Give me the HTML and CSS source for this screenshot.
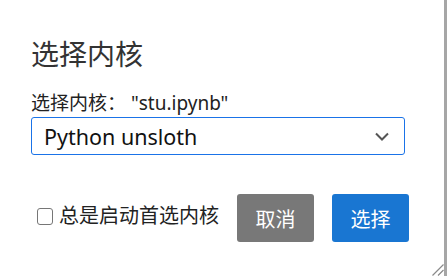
FILE: index.html
```html
<!DOCTYPE html>
<html lang="zh-CN">
<head>
<meta charset="utf-8">
<title>选择内核</title>
<link rel="stylesheet" href="styles.css">
</head>
<body>
<div class="dialog">
  <h1 class="title">选择内核</h1>
  <p class="label">选择内核： "stu.ipynb"</p>
  <div class="select">
    <span class="select-value">Python unsloth</span>
    <svg class="chevron" width="14" height="9" viewBox="0 0 14 9"><path d="M1 1.5 L7 7.5 L13 1.5" fill="none" stroke="#555" stroke-width="2"/></svg>
  </div>
  <div class="footer">
    <label class="check"><span class="box"></span><span>总是启动首选内核</span></label>
    <div class="actions">
      <span class="btn btn-cancel">取消</span>
      <span class="btn btn-ok">选择</span>
    </div>
  </div>
  <svg class="grip" width="12" height="12" viewBox="0 0 12 12"><path d="M0.5 11.5 L11.5 0.5 M6 11.5 L11.5 6" stroke="#8a8a8a" stroke-width="1.2" fill="none"/></svg>
</div>
<div class="edge"></div>
</body>
</html>
```
FILE: styles.css
```css
html, body {
  margin: 0;
  height: 100%;
}
body {
  display: flex;
  background: #fff;
  font-family: "Noto Sans", "Noto Sans CJK SC", sans-serif;
  color: #222;
  overflow: hidden;
}
.dialog {
  flex: 1;
  position: relative;
  padding: 40px 0 0 31px;
}
.edge {
  width: 3px;
  background: #a6a6a6;
}
.title {
  margin: 0;
  font-size: 28px;
  line-height: 28px;
  font-weight: 400;
  color: #333;
}
.label {
  margin: 26px 0 0;
  font-size: 19px;
  line-height: 19px;
}
.select {
  margin-top: 4px;
  width: 374px;
  height: 38px;
  box-sizing: border-box;
  border: 1px solid #1a73e8;
  border-radius: 3px;
  display: flex;
  align-items: center;
  justify-content: space-between;
  padding: 0 15px 0 12px;
  font-size: 21.5px;
  color: #111;
}
.chevron {
  display: block;
}
.footer {
  margin-top: 39px;
  width: 378px;
  display: flex;
  align-items: center;
}
.check {
  display: flex;
  align-items: center;
  gap: 6px;
  margin-left: 6px;
  margin-top: -4px;
  font-size: 20px;
  line-height: 20px;
}
.box {
  width: 16px;
  height: 17px;
  box-sizing: border-box;
  border: 1.5px solid #767676;
  border-radius: 3px;
}
.actions {
  margin-left: auto;
  display: flex;
  gap: 18px;
}
.btn {
  width: 77px;
  height: 48px;
  border-radius: 3px;
  color: #fff;
  font-size: 20px;
  display: flex;
  align-items: center;
  justify-content: center;
}
.btn-cancel {
  background: #787878;
}
.btn-ok {
  background: #1976d2;
}
.grip {
  position: absolute;
  right: 0;
  bottom: 0;
}
```
